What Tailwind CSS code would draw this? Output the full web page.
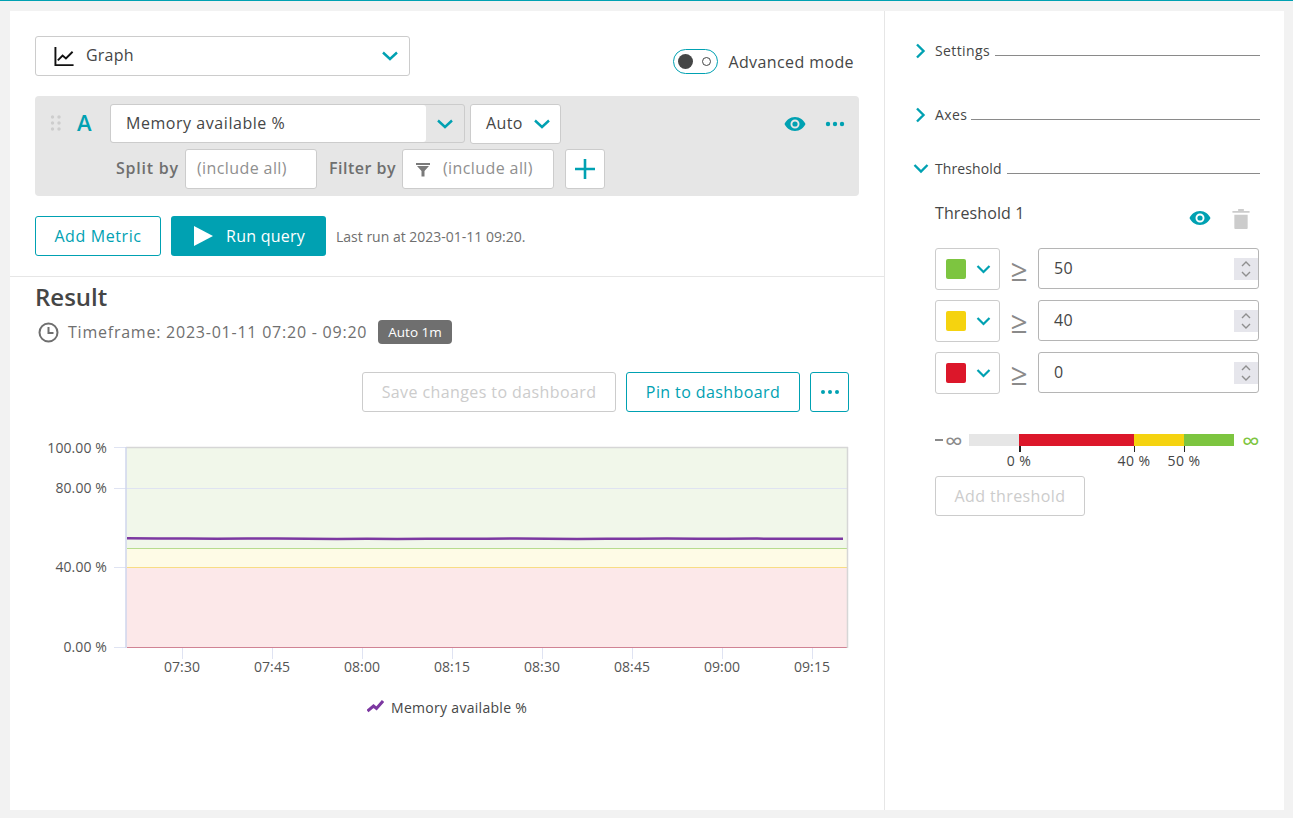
<!DOCTYPE html>
<html lang="en">
<head>
    <meta charset="UTF-8">
    <title>Data explorer</title>
    <script src="https://cdn.jsdelivr.net/npm/@tailwindcss/browser@4"></script>
</head>
<body class="bg-[#f2f2f2] h-[818px] overflow-hidden font-['Open_Sans',sans-serif] text-[#454646] text-[16px] tracking-[0.4px]">
    <div class="h-px bg-[#00a1b2]"></div>
    <div class="flex ml-[10px] mt-[10px] w-[1274px] h-[799px] bg-white">

        <!-- left column -->
        <div class="w-[875px] border-r border-[#e6e6e6]">
            <div class="pt-[25px] pl-[25px] pr-[25px]">
                <div class="flex justify-between items-start">
                    <div class="w-[375px] h-[40px] border border-[#cccccc] rounded-[3px] flex items-center pl-[18px] pr-[10px]">
                        <svg class="w-[21px] h-[21px]" viewBox="0 0 22 22" fill="none" stroke="#111" stroke-width="2"><path d="M1.500 1v19h19"/><path d="M4 15l5-5 3.500 3 7-7"/></svg>
                        <span class="ml-[11px] mb-[2px] flex-1 tracking-[0.2px]">Graph</span>
                        <svg class="w-[18px] h-[12px]" viewBox="0 0 18 12" fill="none" stroke="#00a1b2" stroke-width="2.400"><path d="M2 2.500l7 6.500 7-6.500"/></svg>
                    </div>
                    <div class="flex items-center mt-[12px] mr-[5px]">
                        <div class="w-[45px] h-[25px] border border-[#00a1b2] rounded-full flex items-center justify-between pl-[4px] pr-[6px]">
                            <span class="w-[15px] h-[15px] rounded-full bg-[#454646]"></span>
                            <span class="w-[9px] h-[9px] rounded-full border border-[#454646]"></span>
                        </div>
                        <span class="ml-[10px] mt-[2px]">Advanced mode</span>
                    </div>
                </div>

                <div class="relative mt-[20px] h-[100px] bg-[#e6e6e6] rounded-[4px]">
                    <div class="flex items-start pt-[8px] pl-[15px]">
                        <svg class="w-[12px] h-[20px] mt-[10px]" viewBox="0 0 12 20" fill="#cdcdcd"><circle cx="2.500" cy="3" r="1.700"/><circle cx="9" cy="3" r="1.700"/><circle cx="2.500" cy="9" r="1.700"/><circle cx="9" cy="9" r="1.700"/><circle cx="2.500" cy="15" r="1.700"/><circle cx="9" cy="15" r="1.700"/></svg>
                        <span class="ml-[15px] mt-[3px] w-[33px] text-[22px] leading-[30px] font-semibold text-[#00a1b2]">A</span>
                        <div class="flex w-[355px] h-[39px] rounded-[3px] border border-[#cccccc]">
                            <div class="w-[315px] bg-white rounded-[3px] pl-[15px] leading-[37px] tracking-[0.55px]">Memory available %</div>
                            <div class="flex-1 flex items-center justify-center">
                                <svg class="w-[18px] h-[12px]" viewBox="0 0 18 12" fill="none" stroke="#00a1b2" stroke-width="2.400"><path d="M2 2.500l7 6.500 7-6.500"/></svg>
                            </div>
                        </div>
                        <div class="ml-[5px] w-[91px] h-[40px] bg-white border border-[#cccccc] rounded-[3px] flex items-center pl-[15px]">
                            <span class="flex-1 mb-[3px]">Auto</span>
                            <svg class="w-[18px] h-[12px] mr-[9px]" viewBox="0 0 18 12" fill="none" stroke="#00a1b2" stroke-width="2.400"><path d="M2 2.500l7 6.500 7-6.500"/></svg>
                        </div>
                        <div class="ml-auto flex items-center h-[39px] pr-[14px]">
                            <svg class="w-[22px] h-[16px]" viewBox="0 0 22 16"><path fill="#00a1b2" fill-rule="evenodd" d="M11 1C6 1 2.500 4.200.5 8c2 3.800 5.500 7 10.500 7s8.500-3.200 10.500-7C19.500 4.200 16 1 11 1zm0 2.500a4.500 4.500 0 1 1 0 9 4.500 4.500 0 0 1 0-9z"/><circle cx="11" cy="8" r="2.600" fill="#00a1b2"/></svg>
                            <svg class="ml-[19px] w-[20px] h-[6px]" viewBox="0 0 20 6" fill="#00a1b2"><circle cx="3" cy="3" r="2.200"/><circle cx="10" cy="3" r="2.200"/><circle cx="17" cy="3" r="2.200"/></svg>
                        </div>
                    </div>
                    <div class="flex items-center mt-[5px] ml-[81px]">
                        <span class="w-[69px] mb-[2px] font-semibold text-[#6f6f6f] tracking-[0.75px]">Split by</span>
                        <div class="w-[132px] h-[40px] bg-white border border-[#cccccc] rounded-[3px] pl-[11px] leading-[36px] text-[#8f8f8f]">(include all)</div>
                        <span class="ml-[12px] w-[73px] mb-[2px] font-semibold text-[#6f6f6f] tracking-[0.5px]">Filter by</span>
                        <div class="w-[152px] h-[40px] bg-white border border-[#cccccc] rounded-[3px] flex items-center pl-[13px] text-[#8f8f8f]">
                            <svg class="w-[14px] h-[15px]" viewBox="0 0 14 15" fill="#7a7a7a"><path d="M0 1h14v2H0zM1 4h12L8.500 9v5.500h-3V9z"/></svg>
                            <span class="ml-[13px] mb-[2px]">(include all)</span>
                        </div>
                        <div class="ml-[11px] w-[40px] h-[40px] bg-white border border-[#cccccc] rounded-[3px] flex items-center justify-center">
                            <svg class="w-[20px] h-[20px]" viewBox="0 0 20 20" fill="#00a1b2"><path d="M8.700 0h2.600v8.700H20v2.600h-8.700V20H8.700v-8.700H0V8.700h8.700z"/></svg>
                        </div>
                    </div>
                </div>

                <div class="flex items-center mt-[20px]">
                    <div class="w-[126px] h-[40px] border border-[#00a1b2] rounded-[3px] text-[#00a1b2] tracking-[0.6px] flex items-center justify-center">Add Metric</div>
                    <div class="ml-[10px] w-[155px] h-[40px] bg-[#00a1b2] rounded-[3px] text-white tracking-[0.25px] flex items-center pl-[23px]">
                        <svg class="w-[19px] h-[20px]" viewBox="0 0 19 20" fill="#fff"><path d="M0 0l19 10L0 20z"/></svg>
                        <span class="ml-[13px]">Run query</span>
                    </div>
                    <span class="ml-[10px] text-[14px] tracking-[0px] text-[#6f6f6f]">Last run at 2023-01-11 09:20.</span>
                </div>
            </div>

            <div class="h-px mt-[20px] bg-[#e6e6e6]"></div>

            <div class="pl-[25px] pr-[25px]">
                <h2 class="mt-[5px] text-[24px] leading-[30px] font-semibold tracking-[0px]">Result</h2>
                <div class="flex items-center mt-[8px] h-[24px] text-[#6f6f6f]">
                    <svg class="ml-[3px] w-[21px] h-[21px]" viewBox="0 0 21 21" fill="none" stroke="#6f6f6f" stroke-width="2"><circle cx="10.500" cy="10.500" r="9"/><path d="M10.500 5v6h5"/></svg>
                    <span class="ml-[9px] w-[299px] whitespace-nowrap tracking-[0.77px]">Timeframe: 2023-01-11 07:20 - 09:20</span>
                    <span class="ml-[11px] w-[74px] h-[24px] bg-[#6f6f6f] rounded-[4px] text-white text-[13.500px] tracking-[0px] leading-[24px] text-center">Auto 1m</span>
                </div>
                <div class="flex justify-end mt-[28px] gap-[10px] pr-[10px]">
                    <div class="w-[254px] h-[40px] border border-[#cccccc] rounded-[3px] text-[#cccccc] flex items-center justify-center">Save changes to dashboard</div>
                    <div class="w-[174px] h-[40px] border border-[#00a1b2] rounded-[3px] text-[#00a1b2] flex items-center justify-center">Pin to dashboard</div>
                    <div class="w-[39px] h-[40px] border border-[#00a1b2] rounded-[3px] flex items-center justify-center">
                        <svg class="w-[20px] h-[6px]" viewBox="0 0 20 6" fill="#00a1b2"><circle cx="3" cy="3" r="2"/><circle cx="10" cy="3" r="2"/><circle cx="17" cy="3" r="2"/></svg>
                    </div>
                </div>

                <svg class="mt-[18px] block" width="824" height="260" viewBox="35 430 824 260" font-family="Open Sans" font-size="14" letter-spacing="0.1" fill="#555">
                    <rect x="126" y="448" width="721" height="100" fill="#f1f7ea"/>
                    <rect x="126" y="548" width="721" height="19" fill="#fefbe6"/>
                    <rect x="126" y="567" width="721" height="80" fill="#fce8e9"/>
                    <g stroke="#dfe3f2">
                        <path d="M114 488.500h733M114 567.500h12M114 647.500h12M114 447.500h12"/>
                        <path d="M182.500 648v11M272.500 648v11M362.500 648v11M452.500 648v11M542.500 648v11M632.500 648v11M722.500 648v11M812.500 648v11"/>
                    </g>
                    <path d="M126 447.500h722" stroke="#d6d6d6" stroke-width="1.500"/>
                    <path d="M126 447v201" stroke="#cfd6ec" stroke-width="1.500"/>
                    <path d="M127 548.500h720" stroke="#b7dc8e"/>
                    <path d="M127 567.500h720" stroke="#f8dc84"/>
                    <path d="M127 647.500h720" stroke="#d08394"/>
                    <path d="M847.500 447v201" stroke="#d6d6d6" stroke-width="1.500"/>
                    <path d="M127 538.300l30 .3 30-.1 30 .3 30-.2 30-.1 30 .3 30 .1 30-.2 30 .2 30-.2 30 .1 30-.1 30-.2 30 .3 30 .1 30-.2 30 .1 30-.2 30 .2 30-.1 30-.1 30 .2 30-.1 26 .1" fill="none" stroke="#7c38a1" stroke-width="2.500"/>
                    <g text-anchor="end">
                        <text x="107" y="453">100.00 %</text>
                        <text x="107" y="493">80.00 %</text>
                        <text x="107" y="572">40.00 %</text>
                        <text x="107" y="652">0.00 %</text>
                    </g>
                    <g text-anchor="middle">
                        <text x="182" y="672">07:30</text>
                        <text x="272" y="672">07:45</text>
                        <text x="362" y="672">08:00</text>
                        <text x="452" y="672">08:15</text>
                        <text x="542" y="672">08:30</text>
                        <text x="632" y="672">08:45</text>
                        <text x="722" y="672">09:00</text>
                        <text x="812" y="672">09:15</text>
                    </g>
                </svg>

                <div class="flex items-center mt-[7px] ml-[332px] text-[14px] tracking-[0.3px]">
                    <svg class="w-[17px] h-[14px] mb-[3px]" viewBox="0 0 17 14" fill="none" stroke="#7c38a1" stroke-width="3"><path d="M0.500 12l6-5 3 2.500L16 2"/></svg>
                    <span class="ml-[7px]">Memory available %</span>
                </div>
            </div>
        </div>

        <!-- right column -->
        <div class="flex-1 pl-[30px] pr-[25px] text-[14px]">
            <div class="relative flex items-end mt-[30px] h-[19px]">
                <svg class="absolute left-0 top-[2px] w-[11px] h-[16px]" viewBox="0 0 11 16" fill="none" stroke="#00a1b2" stroke-width="2.400"><path d="M2 1.500L8.500 8 2 14.500"/></svg>
                <span class="ml-[20px] leading-[19px]">Settings</span>
                <span class="flex-1 ml-[5px] mb-[4px] h-px bg-[#8a8a8a]"></span>
            </div>
            <div class="relative flex items-end mt-[45px] h-[19px]">
                <svg class="absolute left-0 top-[2px] w-[11px] h-[16px]" viewBox="0 0 11 16" fill="none" stroke="#00a1b2" stroke-width="2.400"><path d="M2 1.500L8.500 8 2 14.500"/></svg>
                <span class="ml-[20px] leading-[19px]">Axes</span>
                <span class="flex-1 ml-[4px] mb-[4px] h-px bg-[#8a8a8a]"></span>
            </div>
            <div class="relative flex items-end mt-[35px] h-[19px]">
                <svg class="absolute left-[-2px] top-[4px] w-[16px] h-[11px]" viewBox="0 0 16 11" fill="none" stroke="#00a1b2" stroke-width="2.400"><path d="M1.500 2L8 8.500 14.500 2"/></svg>
                <span class="ml-[20px] leading-[19px] tracking-[0.1px]">Threshold</span>
                <span class="flex-1 ml-[5px] mb-[4px] h-px bg-[#8a8a8a]"></span>
            </div>

            <div class="ml-[20px]">
                <div class="flex mt-[23px] h-[24px] text-[16px] leading-[24px] tracking-[0.1px]">
                    <span class="flex-1">Threshold 1</span>
                    <svg class="mt-[9px] w-[22px] h-[16px]" viewBox="0 0 22 16"><path fill="#00a1b2" fill-rule="evenodd" d="M11 1C6 1 2.500 4.200.5 8c2 3.800 5.500 7 10.500 7s8.500-3.200 10.500-7C19.500 4.200 16 1 11 1zm0 2.500a4.500 4.500 0 1 1 0 9 4.500 4.500 0 0 1 0-9z"/><circle cx="11" cy="8" r="2.600" fill="#00a1b2"/></svg>
                    <svg class="ml-[21px] mr-[10px] mt-[8px] w-[18px] h-[20px]" viewBox="0 0 18 21" fill="#cccccc"><path d="M6 0h6v2h6v2H0V2h6z"/><path d="M2 6h14v14a1 1 0 0 1-1 1H3a1 1 0 0 1-1-1z"/></svg>
                </div>

                <div class="flex mt-[23px] h-[42px]">
                    <div class="w-[65px] h-[42px] border border-[#cccccc] rounded-[3px] flex items-center pl-[10px]">
                        <span class="w-[20px] h-[20px] rounded-[2px] bg-[#7dc540]"></span>
                        <svg class="ml-[10px] w-[15px] h-[10px]" viewBox="0 0 15 10" fill="none" stroke="#00a1b2" stroke-width="2.200"><path d="M1.500 2l6 6 6-6"/></svg>
                    </div>
                    <span class="w-[38px] text-center text-[30px] leading-[44px] text-[#8a8a8a]">≥</span>
                    <div class="w-[221px] h-[41px] border border-[#b5b5b5] rounded-[3px] flex items-center pl-[15px] text-[16px] overflow-hidden">
                        <span class="flex-1 mb-[1px]">50</span>
                        <svg class="w-[24px] h-[22px] bg-[#e6e6ec]" viewBox="0 0 24 22" fill="none" stroke="#8f8f8f" stroke-width="1.400"><path d="M8 8l4-4 4 4M8 14l4 4 4-4"/></svg>
                    </div>
                </div>
                <div class="flex mt-[10px] h-[42px]">
                    <div class="w-[65px] h-[42px] border border-[#cccccc] rounded-[3px] flex items-center pl-[10px]">
                        <span class="w-[20px] h-[20px] rounded-[2px] bg-[#f5d30f]"></span>
                        <svg class="ml-[10px] w-[15px] h-[10px]" viewBox="0 0 15 10" fill="none" stroke="#00a1b2" stroke-width="2.200"><path d="M1.500 2l6 6 6-6"/></svg>
                    </div>
                    <span class="w-[38px] text-center text-[30px] leading-[44px] text-[#8a8a8a]">≥</span>
                    <div class="w-[221px] h-[41px] border border-[#b5b5b5] rounded-[3px] flex items-center pl-[15px] text-[16px] overflow-hidden">
                        <span class="flex-1 mb-[1px]">40</span>
                        <svg class="w-[24px] h-[22px] bg-[#e6e6ec]" viewBox="0 0 24 22" fill="none" stroke="#8f8f8f" stroke-width="1.400"><path d="M8 8l4-4 4 4M8 14l4 4 4-4"/></svg>
                    </div>
                </div>
                <div class="flex mt-[10px] h-[42px]">
                    <div class="w-[65px] h-[42px] border border-[#cccccc] rounded-[3px] flex items-center pl-[10px]">
                        <span class="w-[20px] h-[20px] rounded-[2px] bg-[#dc172a]"></span>
                        <svg class="ml-[10px] w-[15px] h-[10px]" viewBox="0 0 15 10" fill="none" stroke="#00a1b2" stroke-width="2.200"><path d="M1.500 2l6 6 6-6"/></svg>
                    </div>
                    <span class="w-[38px] text-center text-[30px] leading-[44px] text-[#8a8a8a]">≥</span>
                    <div class="w-[221px] h-[41px] border border-[#b5b5b5] rounded-[3px] flex items-center pl-[15px] text-[16px] overflow-hidden">
                        <span class="flex-1 mb-[1px]">0</span>
                        <svg class="w-[24px] h-[22px] bg-[#e6e6ec]" viewBox="0 0 24 22" fill="none" stroke="#8f8f8f" stroke-width="1.400"><path d="M8 8l4-4 4 4M8 14l4 4 4-4"/></svg>
                    </div>
                </div>

                <div class="flex items-center mt-[40px] h-[12px]">
                    <span class="w-[34px] flex items-center h-[12px] text-[#8a8a8a] tracking-[0px] whitespace-nowrap">
                        <span class="w-[8px] h-[2px] bg-[#8a8a8a]"></span>
                        <span class="ml-[2px] text-[25px] leading-[12px]">∞</span>
                    </span>
                    <span class="w-[50px] h-[12px] bg-[#e6e6e6]"></span>
                    <span class="w-[115px] h-[12px] bg-[#dc172a]"></span>
                    <span class="w-[50px] h-[12px] bg-[#f5d30f]"></span>
                    <span class="w-[50px] h-[12px] bg-[#7dc540]"></span>
                    <span class="ml-[8px] text-[#7dc540] text-[25px] leading-[12px] tracking-[0px]">∞</span>
                </div>
                <div class="relative h-[24px] text-[14px] leading-[18px]">
                    <span class="absolute left-[84px] top-0 w-[2px] h-[6px] bg-[#222]"></span>
                    <span class="absolute left-[199px] top-0 w-px h-[6px] bg-[#222]"></span>
                    <span class="absolute left-[249px] top-0 w-px h-[6px] bg-[#222]"></span>
                    <span class="absolute left-[64px] top-[6px] w-[40px] text-center">0 %</span>
                    <span class="absolute left-[174px] top-[6px] w-[50px] text-center">40 %</span>
                    <span class="absolute left-[224px] top-[6px] w-[50px] text-center">50 %</span>
                </div>
                <div class="mt-[6px] w-[150px] h-[40px] border border-[#cccccc] rounded-[3px] text-[#cccccc] text-[16px] flex items-center justify-center">Add threshold</div>
            </div>
        </div>
    </div>
</body>
</html>
